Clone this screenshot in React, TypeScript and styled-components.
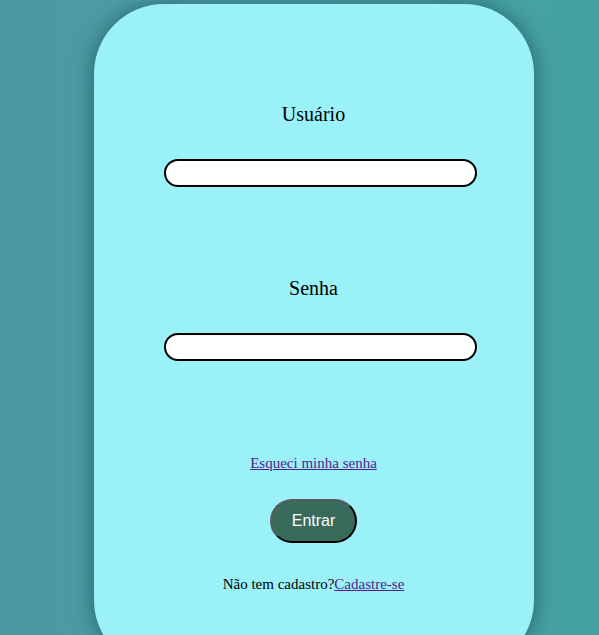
import React from "react";
import styled, { createGlobalStyle } from "styled-components";

const Global = createGlobalStyle`
  html, body { margin: 0; padding: 0; }
  body {
    height: 635px;
    overflow: hidden;
    background: linear-gradient(90deg, #4a97a0 0%, #51a6ae 45%, #44a1a0 100%);
    font-family: "Liberation Serif", "Times New Roman", serif;
  }
`;

const Page = styled.div`
  display: flex;
  justify-content: center;
  padding: 4px 0 0 28px;
  height: 631px;
  overflow: hidden;
`;

const Card = styled.form`
  width: 440px;
  height: 666px;
  flex-shrink: 0;
  background: #9af2f8;
  border-radius: 70px;
  box-shadow: 0 0 22px rgba(10, 50, 60, 0.55);
  display: flex;
  flex-direction: column;
  align-items: center;
  padding-top: 98px;
  box-sizing: border-box;
`;

const Label = styled.label<{ $mt?: number }>`
  font-size: 20px;
  line-height: 24px;
  color: #000;
  margin-top: ${(p) => p.$mt ?? 0}px;
`;

const Input = styled.input`
  width: 313px;
  height: 28px;
  box-sizing: border-box;
  margin: 33px 0 0 13px;
  border: 2px solid #000;
  border-radius: 14px;
  background: #fff;
  outline: none;
  padding: 0 12px;
`;

const Link = styled.a<{ $mt?: number }>`
  color: #551a8b;
  text-decoration: underline;
  font-size: 15px;
  line-height: 18px;
  margin-top: ${(p) => p.$mt ?? 0}px;
  cursor: pointer;
`;

const Button = styled.button`
  margin-top: 27px;
  width: 87px;
  height: 44px;
  box-sizing: border-box;
  background: #386b5c;
  color: #fff;
  font-family: "Liberation Sans", Arial, sans-serif;
  font-size: 16px;
  border: 2px solid;
  border-color: #5a5a5a #000 #000 #5a5a5a;
  border-radius: 22px;
  padding: 0;
  cursor: pointer;
`;

const Footer = styled.p`
  margin: 32px 0 0;
  font-size: 15px;
  line-height: 18px;
  color: #000;
`;

const InlineLink = styled.a`
  color: #551a8b;
  text-decoration: underline;
`;

export default function App() {
  return (
    <>
      <Global />
      <Page>
        <Card onSubmit={(e) => e.preventDefault()}>
          <Label htmlFor="user">Usuário</Label>
          <Input id="user" type="text" />
          <Label htmlFor="pass" $mt={89}>Senha</Label>
          <Input id="pass" type="password" />
          <Link $mt={93}>Esqueci minha senha</Link>
          <Button type="submit">Entrar</Button>
          <Footer>
            Não tem cadastro?<InlineLink>Cadastre-se</InlineLink>
          </Footer>
        </Card>
      </Page>
    </>
  );
}
